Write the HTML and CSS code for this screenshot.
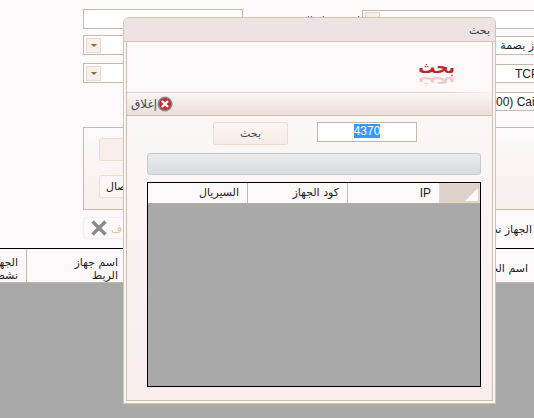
FILE: index.html
```html
<!DOCTYPE html>
<html lang="en">

<head>
  <meta charset="utf-8">
  <title>بحث</title>
  <link rel="stylesheet" href="styles.css">
</head>

<body>
  <div class="page">
    <div class="form-rows">
      <div class="form-row form-row-first">
        <div class="field field-left field-peek" dir="rtl">اسم جهاز البصمة</div>
        <div class="row-label" dir="rtl">اسم جهاز البصمة</div>
        <div class="field field-right"><span class="check"></span><span class="peek-right">كود</span></div>
      </div>
      <div class="form-row form-row-second">
        <div class="field field-left"><span class="drop"><i></i></span></div>
        <div class="row-label"></div>
        <div class="field field-right field-arabic" dir="rtl">ز بصمة ا</div>
      </div>
      <div class="form-row form-row-third">
        <div class="field field-left"><span class="drop"><i></i></span></div>
        <div class="row-label"></div>
        <div class="field field-right field-latin field-tcp">TCP</div>
      </div>
      <div class="form-row form-row-fourth">
        <div class="field field-right field-latin field-zone">(2:00) Cairo</div>
      </div>
    </div>

    <div class="panel">
      <div class="panel-btn"></div>
      <div class="panel-btn panel-btn-small">اتصال</div>
    </div>

    <div class="del-row">
      <div class="del-btn">
        <svg width="18" height="18" viewBox="0 0 18 18">
          <path d="M2.5 2.5l13 13M15.5 2.5l-13 13" stroke="#8b8b8b" stroke-width="3.4" fill="none"/>
        </svg>
        <span class="del-text">حذف</span>
      </div>
      <div class="active-label" dir="rtl">الجهاز نشط</div>
    </div>

    <div class="grid-head">
      <div class="grid-col grid-col-left" dir="rtl">الجهاز<br>نشط</div>
      <div class="grid-col grid-col-link" dir="rtl">اسم جهاز<br>الربط</div>
      <div class="grid-col grid-col-name" dir="rtl">اسم الجهاز</div>
    </div>
    <div class="grid-empty"></div>
  </div>

  <div class="dialog">
    <div class="dialog-title">بحث</div>
    <div class="dialog-body">
      <div class="banner">
        <div class="banner-word">بحث</div>
        <div class="banner-word banner-mirror">بحث</div>
      </div>
      <div class="toolbar">
        <div class="close-btn">
          <svg width="16" height="16" viewBox="0 0 16 16">
            <circle cx="8" cy="8" r="7.6" fill="#8e8e8e"/>
            <circle cx="8" cy="8" r="6" fill="#c62d38"/>
            <path d="M5 5l6 6M11 5l-6 6" stroke="#fff" stroke-width="2.4"/>
          </svg>
          <span>إغلاق</span>
        </div>
      </div>
      <div class="search-row">
        <div class="search-btn">بحث</div>
        <div class="search-input"><span class="selected">4370</span></div>
      </div>
      <div class="progress"></div>
      <div class="result-grid">
        <div class="result-head">
          <div class="result-col result-serial">السيريال</div>
          <div class="result-col result-code">كود الجهاز</div>
          <div class="result-col result-ip">IP</div>
          <div class="result-corner"></div>
        </div>
      </div>
    </div>
  </div>
</body>

</html>
```

FILE: styles.css
```css
html, body {
  margin: 0;
  padding: 0;
}

body {
  width: 534px;
  height: 418px;
  overflow: hidden;
  position: relative;
  background-color: #fdf9fa;
  font-family: 'DejaVu Sans', sans-serif;
  font-size: 11px;
  color: #1c1c1c;
}

.page {
  width: 534px;
  height: 418px;
  overflow: hidden;
  display: flex;
  flex-direction: column;
}

/* form behind the dialog */
.form-rows {
  padding: 9px 0 0 83px;
  height: 101px;
  flex-shrink: 0;
}

.form-row {
  display: flex;
  align-items: flex-end;
  height: 20px;
}

.form-row-second {
  margin-top: 6px;
}

.form-row-third {
  margin-top: 8px;
}

.form-row-fourth {
  margin-top: 8px;
  justify-content: flex-end;
}

.field {
  background-color: #fff;
  border: 1px solid #c4b8a8;
  box-sizing: border-box;
  overflow: hidden;
  white-space: nowrap;
}

.field-left {
  width: 160px;
  height: 20px;
  padding: 2px;
  flex-shrink: 0;
}

.field-peek {
  padding: 0 12px;
  line-height: 24px;
}

.row-label {
  width: 119px;
  flex-shrink: 0;
  height: 20px;
  padding-right: 2px;
  box-sizing: border-box;
  line-height: 24px;
  color: #1d4f91;
  white-space: nowrap;
  overflow: hidden;
}

.field-right {
  width: 172px;
  height: 19px;
  flex-shrink: 0;
  border-right: none;
}

.form-row-first .field-right {
  display: flex;
  padding: 0 2px;
  gap: 28px;
}

.peek-right {
  line-height: 22px;
  color: #1d4f91;
}

.field-arabic {
  line-height: 18px;
}

.field-latin {
  font-family: 'Liberation Sans', sans-serif;
  font-size: 12px;
  line-height: 18px;
}

.field-tcp {
  padding-left: 152px;
}

.field-zone {
  padding-left: 119px;
}

.check {
  display: block;
  width: 15px;
  height: 15px;
  margin-top: 1px;
  flex-shrink: 0;
  box-sizing: border-box;
  background-color: #f7eeea;
  border: 1px solid #e3d5c8;
}

.drop {
  display: flex;
  align-items: center;
  justify-content: center;
  width: 13px;
  height: 13px;
  background-color: #f8eeea;
  border: 1px solid #ead8c8;
}

.drop i {
  display: block;
  width: 0;
  height: 0;
  border-left: 3px solid transparent;
  border-right: 3px solid transparent;
  border-top: 3px solid #8a6a3a;
}

.panel {
  margin: 17px 0 0 83px;
  height: 83px;
  flex-shrink: 0;
  box-sizing: border-box;
  border: 1px solid #c4b8a8;
  border-right: none;
  background: linear-gradient(#fdf9fa, #f7efec);
  padding: 10px 0 0 15px;
  display: flex;
  flex-direction: column;
  gap: 14px;
}

.panel-btn {
  width: 60px;
  height: 23px;
  background-color: #f8efea;
  border: 1px solid #ecdccd;
  border-radius: 3px;
  box-sizing: border-box;
}

.panel-btn-small {
  background-color: #fbf5f3;
  line-height: 21px;
  padding-left: 6px;
}

.del-row {
  display: flex;
  justify-content: space-between;
  margin: 7px 2px 0 83px;
  height: 22px;
  flex-shrink: 0;
}

.del-btn {
  width: 60px;
  height: 22px;
  border: 1px solid #f5efec;
  border-radius: 3px;
  box-sizing: border-box;
  display: flex;
  align-items: center;
  gap: 3px;
  padding-left: 6px;
  white-space: nowrap;
}

.del-text {
  color: #e0c898;
}

.active-label {
  line-height: 25px;
  white-space: nowrap;
}

.grid-head {
  display: flex;
  margin-top: 9px;
  height: 34px;
  flex-shrink: 0;
  box-sizing: border-box;
  border-top: 1px solid #000;
  background-color: #fdf9fa;
}

.grid-col {
  box-sizing: border-box;
  height: 33px;
  padding-top: 7px;
  line-height: 13px;
  white-space: nowrap;
  overflow: hidden;
}

.grid-col-left {
  width: 27px;
  border-right: 1px solid #c4b8a8;
  padding-right: 8px;
  padding-left: 0;
}

.grid-col-link {
  width: 92px;
  padding-right: 1px;
}

.grid-col-name {
  width: 415px;
  padding-top: 13px;
  padding-right: 6px;
}

.grid-empty {
  flex: 1;
  background-color: #a9a9a9;
  border-top: 1px solid #c4b8a8;
}

/* search dialog */
.dialog {
  position: absolute;
  left: 123px;
  top: 17px;
  width: 373px;
  height: 387px;
  box-sizing: border-box;
  border: 1px solid #d3c3a8;
  border-radius: 6px 6px 0 0;
  background-color: #fbf5f5;
  display: flex;
  flex-direction: column;
}

.dialog-title {
  height: 24px;
  flex-shrink: 0;
  box-sizing: border-box;
  background-color: #ede3e2;
  border-bottom: 1px solid #d8c4a4;
  border-radius: 5px 5px 0 0;
  text-align: right;
  padding-right: 5px;
  line-height: 25px;
  color: #2c3a48;
}

.dialog-body {
  flex: 1;
  margin: 0 2px 2px;
  border: 1px solid #c9bfb2;
  border-top: none;
  background: linear-gradient(#fdf9fa, #f7eeec);
  display: flex;
  flex-direction: column;
  min-height: 0;
}

.banner {
  height: 50px;
  flex-shrink: 0;
  position: relative;
  text-align: right;
  padding-right: 37px;
  overflow: hidden;
}

.banner-word {
  font-size: 17px;
  font-weight: bold;
  color: #b8282c;
  line-height: 20px;
  padding-top: 15px;
}

.banner-mirror {
  position: absolute;
  right: 37px;
  top: 31px;
  padding-top: 0;
  transform: scaleY(-1);
  opacity: 0.22;
}

.toolbar {
  height: 24px;
  flex-shrink: 0;
  box-sizing: border-box;
  background:
    linear-gradient(90deg, #d9d3d0 88%, transparent) top / 100% 1px no-repeat,
    linear-gradient(#fbf6f5, #ebded7);
  border-bottom: 1px solid #cdbfb0;
  display: flex;
  align-items: center;
  padding-left: 4px;
}

.close-btn {
  display: flex;
  flex-direction: row-reverse;
  align-items: center;
  font-size: 12px;
  color: #3a4654;
}

.search-row {
  display: flex;
  margin-top: 6px;
  height: 23px;
  flex-shrink: 0;
  padding-left: 86px;
  gap: 29px;
}

.search-btn {
  width: 75px;
  height: 23px;
  box-sizing: border-box;
  background: linear-gradient(#fbf5f3, #f7ebe6);
  border: 1px solid #ecdccd;
  border-radius: 2px;
  text-align: center;
  line-height: 21px;
  color: #3a4654;
}

.search-input {
  width: 100px;
  height: 20px;
  box-sizing: border-box;
  background-color: #fff;
  border: 1px solid #c4b8a8;
  text-align: center;
  line-height: 17px;
  font-family: 'Liberation Sans', sans-serif;
  font-size: 12px;
}

.selected {
  background-color: #3399ff;
  color: #fff;
}

.progress {
  margin: 8px 11px 0 20px;
  height: 22px;
  flex-shrink: 0;
  box-sizing: border-box;
  border: 1px solid #c6cbd2;
  border-radius: 3px;
  background: linear-gradient(#e9ebee, #d9dbde);
}

.result-grid {
  margin: 7px 11px 0 20px;
  height: 205px;
  flex-shrink: 0;
  box-sizing: border-box;
  border: 1px solid #000;
  background-color: #a9a9a9;
}

.result-head {
  height: 21px;
  box-sizing: border-box;
  display: flex;
  background-color: #fdf9fa;
  border-bottom: 1px solid #b5aaa0;
}

.result-col {
  box-sizing: border-box;
  height: 20px;
  line-height: 20px;
  text-align: right;
  padding-right: 8px;
  border-right: 1px solid #c4b8a8;
}

.result-serial,
.result-code {
  width: 100px;
}

.result-ip {
  width: 91px;
  border-right: none;
  font-family: 'Liberation Sans', sans-serif;
  font-size: 12px;
}

.result-corner {
  width: 41px;
  height: 20px;
  box-sizing: border-box;
  display: flex;
  justify-content: flex-end;
  align-items: flex-end;
  padding: 0 1px 1px 0;
  background-color: #dcd2ca;
  border: 1px solid #ead9bf;
}

.result-corner::after {
  content: "";
  width: 0;
  height: 0;
  border-left: 13px solid transparent;
  border-bottom: 13px solid #fdf9fa;
}
```
